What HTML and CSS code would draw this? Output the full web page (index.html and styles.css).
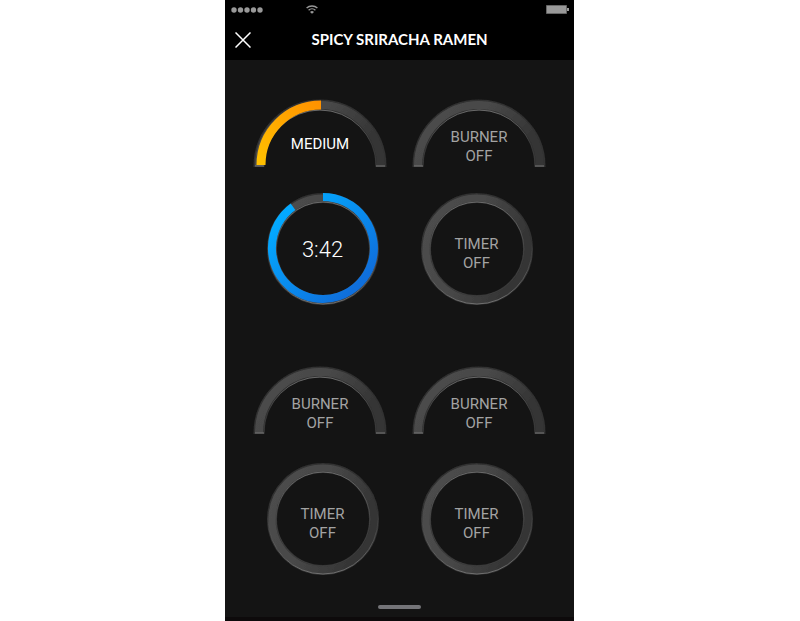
FILE: index.html
```html
<!DOCTYPE html>
<html lang="en">
<head>
<meta charset="utf-8">
<meta name="viewport" content="width=device-width, initial-scale=1">
<title>Spicy Sriracha Ramen</title>
<link rel="stylesheet" href="styles.css">
</head>
<body>
<svg class="defs" aria-hidden="true">
  <defs>
    <linearGradient id="metal" x1="0" y1="0" x2="1" y2="0.4">
      <stop offset="0" stop-color="#4e4e4e"/><stop offset="0.5" stop-color="#484848"/><stop offset="1" stop-color="#343434"/>
    </linearGradient>
    <linearGradient id="heat" gradientUnits="userSpaceOnUse" x1="0" y1="67" x2="67" y2="0">
      <stop offset="0" stop-color="#ffc400"/><stop offset="1" stop-color="#ff9000"/>
    </linearGradient>
    <linearGradient id="time" x1="0.1" y1="0.2" x2="0.8" y2="0.9">
      <stop offset="0" stop-color="#03a9ff"/><stop offset="1" stop-color="#0f6fdc"/>
    </linearGradient>
    <linearGradient id="lower" x1="0" y1="0" x2="0" y2="1">
      <stop offset="0.4" stop-color="#707070" stop-opacity="0"/><stop offset="1" stop-color="#707070"/>
    </linearGradient>
    <linearGradient id="upper" x1="0" y1="0" x2="0" y2="1">
      <stop offset="0" stop-color="#6a6a6a"/><stop offset="0.6" stop-color="#6a6a6a" stop-opacity="0.2"/>
    </linearGradient>
    <filter id="soft" x="-10%" y="-10%" width="120%" height="120%"><feGaussianBlur stdDeviation="0.5"/></filter>
    <g id="arc" fill="none" filter="url(#soft)">
      <path d="M6 68V67a61 61 0 0 1 122 0v1" stroke="#303030" stroke-width="11"/>
      <path d="M6 67a61 61 0 0 1 122 0" stroke="url(#metal)" stroke-width="8"/>
      <path d="M11 67a56 56 0 0 1 112 0" stroke="url(#upper)"/>
      <path d="M2 67h9M123 67h9" stroke="#787878"/>
    </g>
    <g id="ring" fill="none" filter="url(#soft)">
      <circle cx="57" cy="57" r="51" stroke="#303030" stroke-width="10"/>
      <circle cx="57" cy="57" r="51" stroke="url(#metal)" stroke-width="7"/>
      <circle cx="57" cy="57" r="47" stroke="url(#upper)"/>
      <circle cx="57" cy="57" r="55" stroke="url(#lower)"/>
    </g>
  </defs>
</svg>
<div class="phone">
  <header class="header">
    <div class="status">
      <svg class="signal" viewBox="0 0 32 6" aria-hidden="true"><g fill="#999"><circle cx="3" cy="3" r="2.7"/><circle cx="9.5" cy="3" r="2.7"/><circle cx="16" cy="3" r="2.7"/><circle cx="22.500" cy="3" r="2.7"/><circle cx="29" cy="3" r="2.7"/></g></svg>
      <svg class="wifi" viewBox="0 0 12 9" aria-hidden="true"><g fill="none" stroke="#999" stroke-width="1.4"><path d="M.6 3.100a8 8 0 0 1 10.800 0M2.600 5.200a5 5 0 0 1 6.800 0"/></g><path d="M6 8.800L4 7a3 3 0 0 1 4 0z" fill="#999"/></svg>
      <svg class="battery" viewBox="0 0 23 9" aria-hidden="true"><path d="M.5.5h20v8H.5z" fill="#999" stroke="#666"/><path d="M21 3h2v3h-2z" fill="#999"/></svg>
    </div>
    <div class="nav">
      <button class="close" type="button" aria-label="Close"><svg viewBox="0 0 16 16" aria-hidden="true"><path d="M.5.5l15 15M15.500.5l-15 15" stroke="#fff" stroke-width="1.500" fill="none"/></svg></button>
      <h1 class="title">SPICY SRIRACHA RAMEN</h1>
    </div>
  </header>
  <main class="stove">
    <section class="zone">
      <div class="burners">
        <button class="dial burner on" type="button">
          <svg viewBox="0 0 134 70" aria-hidden="true"><use href="#arc"/><path d="M8 66a60 60 0 0 1 60-60" fill="none" stroke="url(#heat)" stroke-width="9"/></svg>
          <span class="label">MEDIUM</span>
        </button>
        <button class="dial burner" type="button">
          <svg viewBox="0 0 134 70" aria-hidden="true"><use href="#arc"/></svg>
          <span class="label">BURNER<br>OFF</span>
        </button>
      </div>
      <div class="timers">
        <button class="dial timer on" type="button">
          <svg viewBox="0 0 114 114" aria-hidden="true"><use href="#ring"/><path d="M57 5a51 51 0 1 1-30 9.700" fill="none" stroke="url(#time)" stroke-width="8"/></svg>
          <span class="label time">3:42</span>
        </button>
        <button class="dial timer" type="button">
          <svg viewBox="0 0 114 114" aria-hidden="true"><use href="#ring"/></svg>
          <span class="label">TIMER<br>OFF</span>
        </button>
      </div>
    </section>
    <section class="zone front">
      <div class="burners">
        <button class="dial burner" type="button">
          <svg viewBox="0 0 134 70" aria-hidden="true"><use href="#arc"/></svg>
          <span class="label">BURNER<br>OFF</span>
        </button>
        <button class="dial burner" type="button">
          <svg viewBox="0 0 134 70" aria-hidden="true"><use href="#arc"/></svg>
          <span class="label">BURNER<br>OFF</span>
        </button>
      </div>
      <div class="timers">
        <button class="dial timer" type="button">
          <svg viewBox="0 0 114 114" aria-hidden="true"><use href="#ring"/></svg>
          <span class="label">TIMER<br>OFF</span>
        </button>
        <button class="dial timer" type="button">
          <svg viewBox="0 0 114 114" aria-hidden="true"><use href="#ring"/></svg>
          <span class="label">TIMER<br>OFF</span>
        </button>
      </div>
    </section>
  </main>
  <div class="handle"></div>
</div>
</body>
</html>
```

FILE: styles.css
```css
* { box-sizing: border-box; }

body {
  margin: 0;
  padding-right: 1px;
  background: #fff;
  font-family: Roboto, "Liberation Sans", sans-serif;
}

.defs { position: absolute; width: 0; height: 0; }

.phone {
  display: flex;
  flex-direction: column;
  width: 100%;
  max-width: 349px;
  min-height: 100vh;
  margin: 0 auto;
  background: #141414;
  border-bottom: 4px solid #0d0a0b;
}

.header { background: #000; color: #fff; }

.status {
  display: grid;
  grid-template-columns: 3fr 12px 10fr;
  align-items: center;
  height: 19px;
  padding: 0 5px 0 6px;
}

.signal { width: 32px; height: 6px; }
.wifi { width: 12px; height: 9px; }
.battery { width: 23px; height: 9px; justify-self: end; }

.nav {
  display: grid;
  grid-template-columns: 36px 1fr 36px;
  align-items: center;
  height: 41px;
}

.close {
  display: grid;
  place-items: center;
  height: 41px;
  padding: 0;
  border: 0;
  background: none;
}

.close svg { width: 16px; height: 16px; }

.title {
  margin: 0;
  padding-bottom: 1px;
  font: 700 15px/20px Lato, "Liberation Sans", sans-serif;
  text-align: center;
}

.stove {
  display: flex;
  flex: 1;
  flex-direction: column;
  gap: 60px;
  padding-top: 39px;
}

.zone { display: flex; flex-direction: column; gap: 23px; }
.zone.front { gap: 26px; }

.burners, .timers { display: flex; justify-content: center; }
.burners { gap: 25px; }
.timers { gap: 40px; }

.dial {
  display: grid;
  place-items: center;
  padding: 0;
  border: 0;
  background: none;
  color: #a3a3a3;
  font: 400 15px/19px Roboto, "Liberation Sans", sans-serif;
}

.dial > * { grid-area: 1 / 1; }
.dial svg { display: block; }
.burner svg { width: 134px; height: 70px; }
.timer svg { width: 114px; height: 114px; }
.burner .label { padding-top: 26px; }
.timer .label { padding-top: 10px; }
.burner.on .label { padding-top: 20px; }
.on { color: #fff; }
.timer .time { padding-top: 2px; font-size: 22px; font-weight: 300; line-height: 24px; }

.handle {
  width: 43px;
  height: 4px;
  margin: 0 auto 8px;
  border-radius: 2px;
  background: #747478;
}
```
